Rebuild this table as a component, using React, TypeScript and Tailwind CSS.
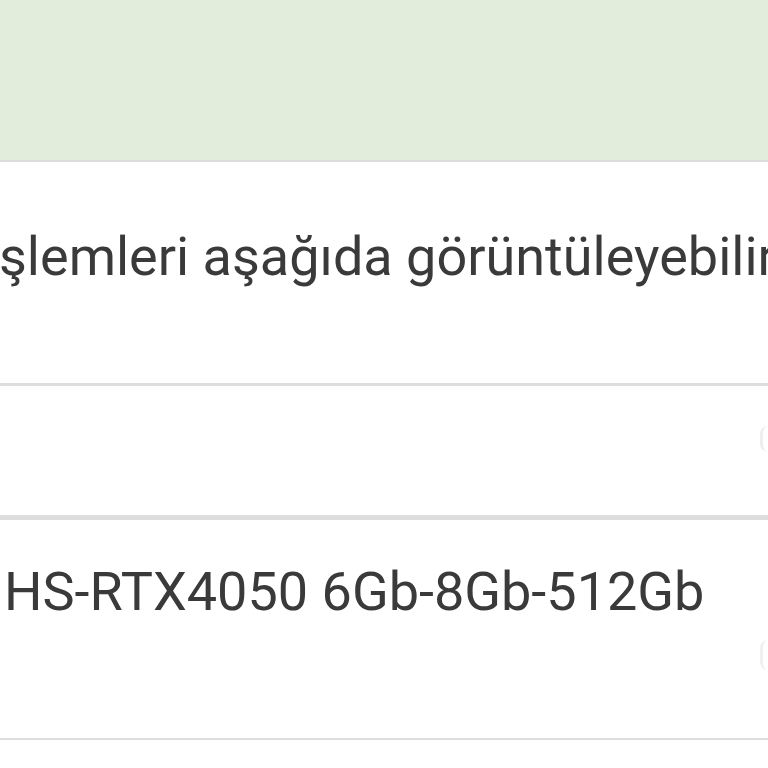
import React from 'react';

const font = { fontFamily: 'Roboto, "Noto Sans", sans-serif' };

const App: React.FC = () => {
  return (
    <div className="w-[768px] h-[768px] overflow-hidden bg-white text-[#3a3a3a]" style={font}>
      <div className="h-[162px] bg-[#e2eedb] border-b-2 border-[#dcdcdc]" />
      <div className="h-[224px] border-b-[3px] border-[#dddddd] pt-[68px] overflow-hidden">
        <p className="whitespace-nowrap text-[54px] leading-[54px] -ml-[1px]">şlemleri aşağıda görüntüleyebilirsiniz.</p>
      </div>
      <div className="h-[134px] border-b-[5px] border-[#dddddd] flex justify-end items-start pt-[40px] overflow-hidden">
        <div className="w-[8px] h-[26px] border-l-[3px] border-[#eeeeee] rounded-l-full" />
      </div>
      <div className="h-[220px] border-b-2 border-[#dddddd] pt-[45px] pl-[4px] flex justify-between overflow-hidden">
        <p className="whitespace-nowrap text-[54px] leading-[54px]">HS-RTX4050 6Gb-8Gb-512Gb</p>
        <div className="self-end mb-[68px] w-[8px] h-[30px] border-l-[3px] border-[#f0f0f0] rounded-l-full" />
      </div>
    </div>
  );
};

export default App;
